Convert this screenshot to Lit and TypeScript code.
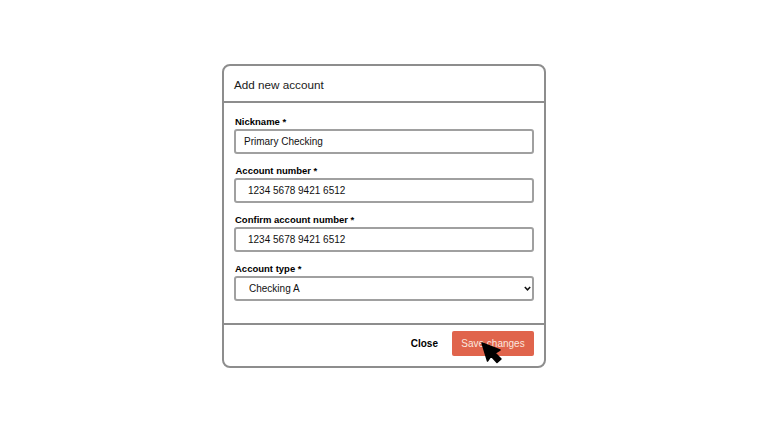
import { LitElement, html, css } from "lit";
import { customElement } from "lit/decorators.js";

@customElement("app-root")
export class AppRoot extends LitElement {
  static styles = css`
    :host {
      display: flex;
      width: 768px;
      height: 432px;
      align-items: flex-start;
      justify-content: flex-start;
      background: #fff;
      font-family: "Liberation Sans", Arial, sans-serif;
      color: #111;
      overflow: hidden;
    }
    .dialog {
      box-sizing: border-box;
      width: 324px;
      height: 304px;
      margin: 64px 0 0 222px;
      border: 2px solid #8d8d8d;
      border-radius: 8px;
      display: flex;
      flex-direction: column;
      position: relative;
    }
    .header {
      box-sizing: border-box;
      height: 37px;
      padding: 2px 10px 0;
      display: flex;
      align-items: center;
      font-size: 11.7px;
      border-bottom: 2px solid #8d8d8d;
      color: #1a1a1a;
    }
    .body {
      flex: 1;
      padding: 12px 10px 0;
      display: flex;
      flex-direction: column;
      gap: 10px;
    }
    .field {
      display: flex;
      flex-direction: column;
      gap: 1px;
    }
    label {
      font-size: 9.5px;
      font-weight: 700;
      line-height: 13px;
      padding-left: 1px;
      color: #000;
    }
    .shift {
      padding-left: 1.5px;
    }
    input,
    select {
      box-sizing: border-box;
      width: 100%;
      height: 25px;
      margin: 0;
      border: 2px solid #a0a0a0;
      border-radius: 3px;
      background: #fff;
      color: #111;
      font: 10px "Liberation Sans", Arial, sans-serif;
      outline: none;
    }
    .p-name {
      padding: 0 0 0 8px;
    }
    .p-num {
      padding: 0 0 0 12px;
    }
    .select-wrap {
      position: relative;
      display: flex;
    }
    select {
      appearance: none;
      padding: 0 0 0 13px;
    }
    .chevron {
      position: absolute;
      right: 3px;
      top: 10px;
      width: 7px;
      height: 5px;
      pointer-events: none;
    }
    .footer {
      box-sizing: border-box;
      height: 43px;
      border-top: 2px solid #8d8d8d;
      padding: 6px 10px 0 0;
      display: flex;
      justify-content: flex-end;
      align-items: flex-start;
      gap: 14px;
    }
    button {
      box-sizing: border-box;
      height: 25px;
      border: none;
      margin: 0;
      border-radius: 2px;
      font: 10px "Liberation Sans", Arial, sans-serif;
      cursor: pointer;
      padding: 0;
    }
    .close {
      background: transparent;
      font-weight: 700;
      color: #000;
    }
    .save {
      width: 82px;
      background: #e0644c;
      color: #fbe6df;
    }
    .cursor {
      position: absolute;
      left: 256px;
      top: 275px;
      width: 25px;
      height: 25px;
    }
  `;

  render() {
    return html`
      <div class="dialog">
        <div class="header">Add new account</div>
        <div class="body">
          <div class="field">
            <label>Nickname *</label>
            <input class="p-name" .value=${"Primary Checking"} />
          </div>
          <div class="field">
            <label class="shift">Account number *</label>
            <input class="p-num" .value=${"1234 5678 9421 6512"} />
          </div>
          <div class="field">
            <label>Confirm account number *</label>
            <input class="p-num" .value=${"1234 5678 9421 6512"} />
          </div>
          <div class="field">
            <label>Account type *</label>
            <div class="select-wrap">
              <select><option>Checking A</option></select>
              <svg class="chevron" viewBox="0 0 7 5">
                <path d="M0.8 1 L3.5 3.8 L6.2 1" fill="none" stroke="#111" stroke-width="1.5"/>
              </svg>
            </div>
          </div>
        </div>
        <div class="footer">
          <button class="close">Close</button>
          <button class="save">Save changes</button>
        </div>
        <svg class="cursor" viewBox="0 0 25 25">
          <path d="M2 2 L7.5 20 L11 15 L17 21.5 L21 18 L15 12 L20 9 Z" fill="#000" stroke="#000" stroke-width="1.5" stroke-linejoin="round"/>
        </svg>
      </div>
    `;
  }
}
